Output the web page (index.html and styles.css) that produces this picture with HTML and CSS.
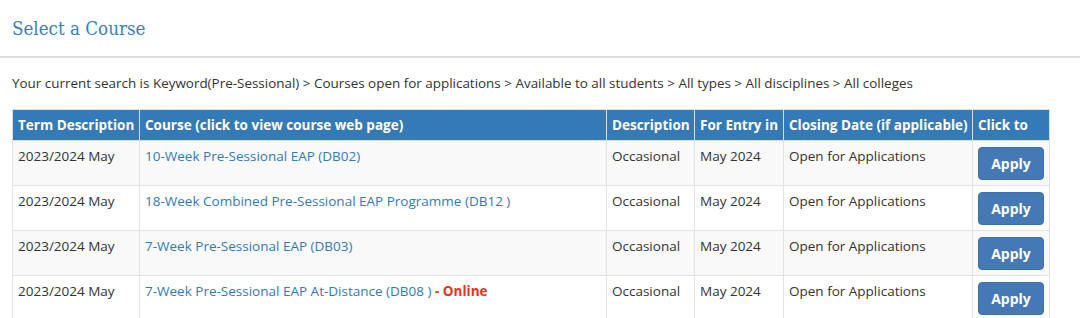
FILE: index.html
```html
<!DOCTYPE html>
<html lang="en">
<head>
<meta charset="utf-8">
<title>Select a Course</title>
<link rel="stylesheet" href="styles.css">
</head>
<body>
<header class="page-head">
  <h1 class="page-title">Select a Course</h1>
</header>
<main class="content">
  <p class="crumbs">Your current search is Keyword(Pre-Sessional) &gt; Courses open for applications &gt; Available to all students &gt; All types &gt; All disciplines &gt; All colleges</p>
  <table class="courses">
    <colgroup>
      <col class="c-term"><col class="c-course"><col class="c-desc"><col class="c-entry"><col class="c-close"><col class="c-click">
    </colgroup>
    <thead>
      <tr>
        <th>Term Description</th>
        <th>Course (click to view course web page)</th>
        <th>Description</th>
        <th>For Entry in</th>
        <th>Closing Date (if applicable)</th>
        <th>Click to</th>
      </tr>
    </thead>
    <tbody>
      <tr>
        <td>2023/2024 May</td>
        <td><a href="#">10-Week Pre-Sessional EAP (DB02)</a></td>
        <td>Occasional</td>
        <td>May 2024</td>
        <td>Open for Applications</td>
        <td><button class="apply">Apply</button></td>
      </tr>
      <tr>
        <td>2023/2024 May</td>
        <td><a href="#">18-Week Combined Pre-Sessional EAP Programme (DB12 )</a></td>
        <td>Occasional</td>
        <td>May 2024</td>
        <td>Open for Applications</td>
        <td><button class="apply">Apply</button></td>
      </tr>
      <tr>
        <td>2023/2024 May</td>
        <td><a href="#">7-Week Pre-Sessional EAP (DB03)</a></td>
        <td>Occasional</td>
        <td>May 2024</td>
        <td>Open for Applications</td>
        <td><button class="apply">Apply</button></td>
      </tr>
      <tr>
        <td>2023/2024 May</td>
        <td><a href="#">7-Week Pre-Sessional EAP At-Distance (DB08 )</a> <span class="online">- Online</span></td>
        <td>Occasional</td>
        <td>May 2024</td>
        <td>Open for Applications</td>
        <td><button class="apply">Apply</button></td>
      </tr>
    </tbody>
  </table>
</main>
</body>
</html>
```
FILE: styles.css
```css
html, body {
  margin: 0;
  padding: 0;
  background: #fff;
}
body {
  font-family: "Open Sans", "Liberation Sans", sans-serif;
  font-size: 13.5px;
  color: #333;
  overflow: hidden;
}
.page-head {
  height: 56px;
  border-bottom: 2px solid #dedede;
  display: flex;
  align-items: center;
  padding: 0 12px;
  box-sizing: content-box;
}
.page-title {
  margin: 0;
  font-family: "DejaVu Serif Condensed", "DejaVu Serif", "Liberation Serif", serif;
  font-stretch: condensed;
  font-weight: normal;
  font-size: 18.6px;
  color: #3a80bd;
}
.content {
  padding: 0 31px 0 12px;
}
.crumbs {
  margin: 0;
  height: 51px;
  line-height: 50px;
  font-size: 13.45px;
  color: #333;
  white-space: nowrap;
}
.courses {
  border-collapse: collapse;
  table-layout: fixed;
  width: 1037px;
  border: 1px solid #ddd;
}
.c-term { width: 127px; }
.c-course { width: 467px; }
.c-desc { width: 88px; }
.c-entry { width: 89px; }
.c-close { width: 189px; }
.c-click { width: 77px; }
.courses th {
  background: #337ab7;
  color: #fff;
  font-weight: bold;
  text-align: left;
  font-size: 13.5px;
  height: 30px;
  padding: 0 5px;
  border: 1px solid #ddd;
  border-top: none;
  white-space: nowrap;
  overflow: hidden;
}
.courses td {
  vertical-align: top;
  padding: 5px;
  border: 1px solid #e2e2e2;
  height: 34px;
  line-height: 20px;
  white-space: nowrap;
}
.courses tbody tr:nth-child(odd) td {
  background: #f9f9f9;
}
.courses a {
  color: #337ab7;
  text-decoration: none;
}
.online {
  color: #e53222;
  font-weight: bold;
}
.apply {
  display: block;
  width: 66px;
  height: 33px;
  margin: 1px 0 0 0;
  border: 1px solid #3d72a8;
  border-radius: 4px;
  background: #4479b5;
  color: #fff;
  font-family: "Open Sans", "Liberation Sans", sans-serif;
  font-weight: bold;
  font-size: 14px;
  padding: 0;
}
```
